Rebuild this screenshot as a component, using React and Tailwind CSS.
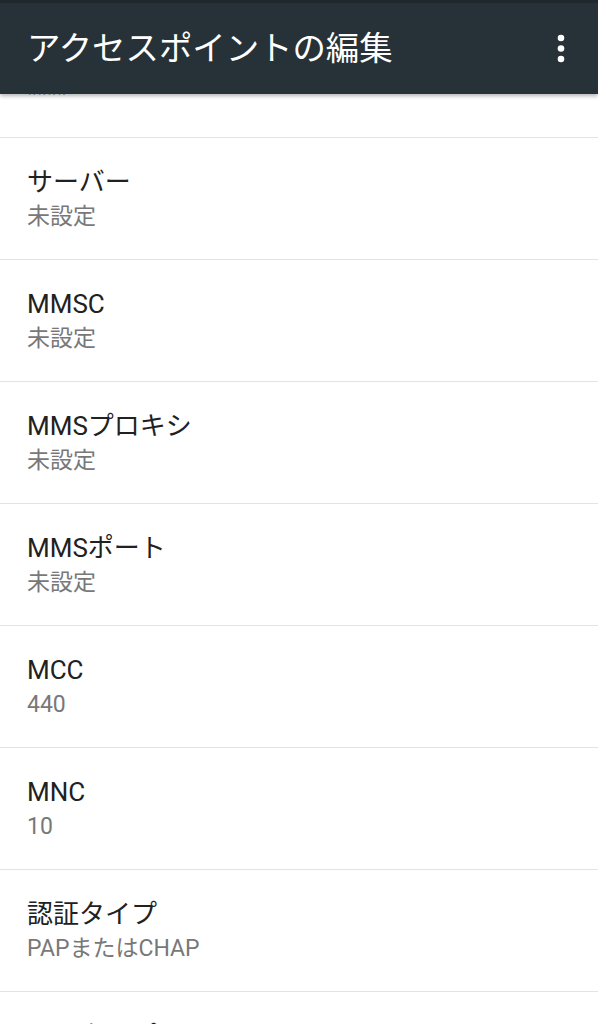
const ajustes = [
  { titulo: "サーバー", valor: "未設定" },
  { titulo: "MMSC", valor: "未設定" },
  { titulo: "MMSプロキシ", valor: "未設定" },
  { titulo: "MMSポート", valor: "未設定" },
  { titulo: "MCC", valor: "440" },
  { titulo: "MNC", valor: "10" },
  { titulo: "認証タイプ", valor: "PAPまたはCHAP" },
  { titulo: "APNタイプ", valor: "default,supl" },
]

// Fila de preferencia con título y resumen
function Fila({ titulo, valor }) {
  return (
    <div className="border-b border-[#e3e3e3] px-[27px] pt-[27px] pb-[26px]">
      <p className="text-[26px] leading-[35px] text-[#212121]">{titulo}</p>
      <p className="text-[23px] leading-[33px] text-[#787878]">{valor}</p>
    </div>
  )
}

export default function App() {
  return (
    <div
      className="h-screen overflow-hidden bg-white"
      style={{ fontFamily: '"Roboto", "Noto Sans CJK JP", sans-serif' }}
    >
      <header className="relative z-10 flex h-[94px] items-center justify-between border-t-[3px] border-[#1f292d] bg-[#263238] pl-[27px] pr-[33px] shadow-[0_2px_4px_rgba(0,0,0,0.3)]">
        <h1 className="text-[33.4px] leading-none font-normal text-white">
          アクセスポイントの編集
        </h1>
        <svg width="8" height="30" viewBox="0 0 8 30" className="fill-white">
          <circle cx="4" cy="4" r="3.3" />
          <circle cx="4" cy="14.5" r="3.3" />
          <circle cx="4" cy="25" r="3.3" />
        </svg>
      </header>

      {/* fila anterior, cortada por la barra */}
      <div className="flex h-[44px] flex-col justify-end overflow-hidden border-b border-[#e3e3e3] px-[27px] pb-[26px]">
        <p className="shrink-0 text-[23px] leading-[32px] text-[#787878]">****</p>
      </div>

      {ajustes.map((a) => (
        <Fila key={a.titulo} titulo={a.titulo} valor={a.valor} />
      ))}
    </div>
  )
}
